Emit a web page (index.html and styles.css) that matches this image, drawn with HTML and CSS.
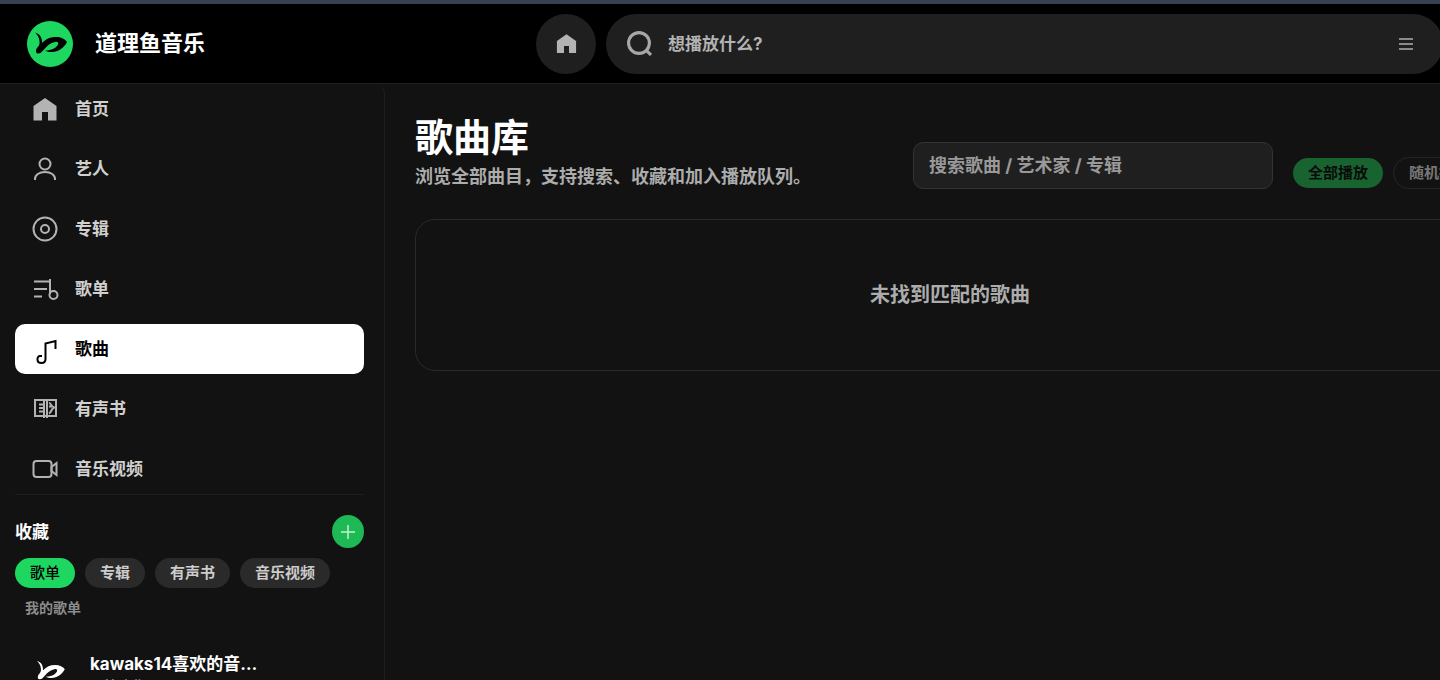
FILE: index.html
```
<!DOCTYPE html>
<html lang="zh-CN">
<head>
    <meta charset="UTF-8">
    <title>道理鱼音乐</title>
    <link rel="stylesheet" href="styles.css">
</head>
<body>
<svg class="sprite" aria-hidden="true">
    <symbol id="fish" viewBox="0 0 46 46">
        <path d="M8 11.500C13 13 15 16 15 22 19 18 23 16 29 16c5 0 9 2 11 5-3 6-9 10-15 10-3 0-5-.5-7-1.500 7 0 11-2.500 13-6 1-2.500-1-3-3-2.500-5 1-8 4-11 7.500C15 30.500 14 32.500 11 32.500S9 28 10 27c2-2 3-4 2.500-7C12 16 10.500 14 8 11.500z"/>
    </symbol>
    <symbol id="house" viewBox="0 0 30 30">
        <path d="M15 4 26.500 12v14.500H18V18h-6v8.500H3.500V12z"/>
    </symbol>
</svg>

<div class="app">
    <header class="topbar">
        <a href="#" class="brand">
            <svg class="logo" viewBox="0 0 46 46"><circle cx="23" cy="23" r="23"/><use href="#fish"/></svg>
            <span>道理鱼音乐</span>
        </a>
        <div class="top-search">
            <button class="home-btn" aria-label="首页"><svg><use href="#house"/></svg></button>
            <div class="search-box">
                <svg class="search-icon" viewBox="0 0 24 24"><circle cx="11.500" cy="11.500" r="10"/><path d="m18.500 18.500 4.500 4.500"/></svg>
                <input type="text" placeholder="想播放什么?" aria-label="搜索">
                <button class="menu-btn" aria-label="菜单">
                    <svg viewBox="0 0 14 12"><path d="M0 1h14M0 6h14M0 11h14"/></svg>
                </button>
            </div>
        </div>
    </header>

    <div class="body">
        <aside class="sidebar">
            <nav class="nav">
                <a href="#"><svg class="solid"><use href="#house"/></svg>首页</a>
                <a href="#"><svg viewBox="0 0 30 30"><circle cx="15" cy="10" r="5.500"/><path d="M5 26v-1c0-4 4-7 10-7s10 3 10 7v1"/></svg>艺人</a>
                <a href="#"><svg viewBox="0 0 30 30"><circle cx="15" cy="15" r="11.500"/><circle cx="15" cy="15" r="4"/></svg>专辑</a>
                <a href="#"><svg viewBox="0 0 30 30"><path d="M4 7.500h16M4 15h13M4 22.500h8M20 5v15"/><circle cx="23.500" cy="21" r="4"/></svg>歌单</a>
                <a href="#" class="active"><svg viewBox="0 0 30 30"><path d="M12 22h-2a2.500 3 0 0 0-2.500 3.500c0 2 1.500 3.500 4 3.500 2.500 0 4-1.500 4-4V9.500L25.500 7v8"/></svg>歌曲</a>
                <a href="#"><svg viewBox="0 0 30 30"><path d="M5 6h21v16H5zM14 6v18M17 6v18M9 10.500h4M9 14h4M9 17.500h4"/><path d="M19 9c2 0 2 3.500 5 4.500-3 1.500-2.500 5-5 6M19 12.500h4"/></svg>有声书</a>
                <a href="#"><svg viewBox="0 0 30 30"><rect x="3.500" y="7" width="18" height="16" rx="3"/><path d="m21.500 13 5-4v12l-5-4z"/></svg>音乐视频</a>
            </nav>

            <section class="library">
                <div class="library-head">
                    <h2>收藏</h2>
                    <button class="add-btn" aria-label="新建歌单"><svg viewBox="0 0 14 14"><path d="M7 0v14M0 7h14"/></svg></button>
                </div>
                <div class="chips">
                    <button class="chip on">歌单</button>
                    <button class="chip">专辑</button>
                    <button class="chip">有声书</button>
                    <button class="chip">音乐视频</button>
                </div>
                <h3>我的歌单</h3>
                <a href="#" class="playlist">
                    <svg class="cover"><use href="#fish"/></svg>
                    <div class="playlist-info">
                        <div class="playlist-name">kawaks14喜欢的音乐歌单</div>
                        <div class="playlist-count">0 首歌曲</div>
                    </div>
                </a>
            </section>
        </aside>

        <main class="content">
            <div class="page-head">
                <div class="page-title">
                    <h1>歌曲库</h1>
                    <p>浏览全部曲目，支持搜索、收藏和加入播放队列。</p>
                </div>
                <div class="tools">
                    <input type="text" class="filter" placeholder="搜索歌曲 / 艺术家 / 专辑" aria-label="搜索歌曲">
                    <div class="actions">
                        <button class="play-all" disabled>全部播放</button>
                        <button class="shuffle" disabled>随机播放</button>
                    </div>
                </div>
            </div>
            <div class="empty">未找到匹配的歌曲</div>
        </main>
    </div>
</div>
</body>
</html>
```
FILE: styles.css
```
* {
    box-sizing: border-box;
}
body {
    margin: 0;
    height: 100vh;
    overflow: hidden;
    background-color: #121212;
    color: #fff;
    font-family: Inter, "Noto Sans CJK SC", sans-serif;
    font-weight: 700;
    line-height: 1.5;
}
a {
    color: inherit;
    text-decoration: none;
}
button, input {
    font-family: inherit;
    font-weight: inherit;
    line-height: inherit;
    border: none;
    padding: 0;
}
h1, h2, h3, p {
    margin: 0;
}
.sprite {
    display: none;
}
.app {
    display: flex;
    flex-direction: column;
    height: 100vh;
    min-width: 1515px;
    border-top: 4px solid #364152;
}

/* top bar */
.topbar {
    display: flex;
    align-items: center;
    flex-shrink: 0;
    height: 80px;
    padding: 0 72px 0 27px;
    background-color: #000;
    border-bottom: 1px solid #1e1e1e;
}
.brand {
    display: flex;
    align-items: center;
    gap: 22px;
    width: 509px;
    font-size: 22px;
}
.logo {
    width: 46px;
    height: 46px;
}
.logo circle {
    fill: #1ed760;
}
.top-search {
    display: flex;
    flex: 1;
    gap: 10px;
}
.home-btn {
    display: flex;
    align-items: center;
    justify-content: center;
    width: 60px;
    height: 60px;
    border-radius: 50%;
    background-color: #1f1f1f;
}
.home-btn svg {
    width: 25px;
    height: 25px;
    fill: #b3b3b3;
}
.search-box {
    display: flex;
    flex: 1;
    align-items: center;
    height: 60px;
    padding: 0 30px 0 21px;
    border-radius: 30px;
    background-color: #1f1f1f;
}
.search-icon {
    width: 25px;
    height: 25px;
    fill: none;
    stroke: #a7a7a7;
    stroke-width: 3;
}
.search-box input {
    flex: 1;
    margin-left: 16px;
    background: none;
    color: #fff;
    font-size: 17px;
    line-height: 28px;
}
.search-box input::placeholder {
    color: #b3b3b3;
}
.menu-btn {
    display: flex;
    background: none;
}
.menu-btn svg {
    width: 14px;
    height: 12px;
    stroke: #8a8a8a;
    stroke-width: 2;
}

.body {
    display: flex;
    flex: 1;
    min-height: 0;
}

/* sidebar */
.sidebar {
    width: 385px;
    flex-shrink: 0;
    padding: 0 20px 0 15px;
    overflow: hidden;
    border-right: 1px solid #1e1e1e;
    border-top-right-radius: 10px;
}
.nav {
    display: flex;
    flex-direction: column;
    gap: 10px;
    border-bottom: 1px solid #1e1e1e;
}
.nav a {
    display: flex;
    align-items: center;
    gap: 15px;
    height: 50px;
    padding: 0 15px;
    border-radius: 10px;
    color: #d0d0d0;
    font-size: 17px;
    line-height: 28px;
}
.nav svg {
    width: 30px;
    height: 30px;
    fill: none;
    stroke: #b3b3b3;
    stroke-width: 2;
}
.nav .solid {
    fill: #b3b3b3;
    stroke: none;
}
.nav .active {
    background-color: #fff;
    color: #000;
}
.nav .active svg {
    stroke: #000;
}
.library {
    padding-top: 20px;
}
.library-head {
    display: flex;
    align-items: center;
    justify-content: space-between;
    margin-bottom: 10px;
}
.library-head h2 {
    font-size: 17px;
    line-height: 28px;
}
.add-btn {
    display: flex;
    align-items: center;
    justify-content: center;
    width: 32px;
    height: 33px;
    border-radius: 50%;
    background-color: #1db954;
}
.add-btn svg {
    width: 14px;
    height: 14px;
    stroke: #c5eed3;
    stroke-width: 1.5;
}
.chips {
    display: flex;
    gap: 10px;
}
.chip {
    height: 30px;
    padding: 0 15px;
    border-radius: 15px;
    background-color: #2a2a2a;
    color: #ccc;
    font-size: 15px;
}
.chip.on {
    background-color: #1ed760;
    color: #000;
    font-weight: 500;
}
.library h3 {
    padding: 0 10px;
    margin-top: 10px;
    color: #8c8c8c;
    font-size: 14px;
    line-height: 20px;
}
.playlist {
    display: flex;
    gap: 20px;
    margin-top: 30px;
    padding: 0 15px;
}
.cover {
    width: 40px;
    height: 46px;
    fill: #fff;
}
.playlist-info {
    width: 170px;
    padding-top: 3px;
}
.playlist-name {
    overflow: hidden;
    font-size: 17px;
    line-height: 26px;
    text-overflow: ellipsis;
    white-space: nowrap;
}
.playlist-count {
    color: #999;
    font-size: 14px;
    font-weight: 500;
    line-height: 18px;
}

/* song library */
.content {
    flex: 1;
    padding: 30px;
}
.page-head {
    display: flex;
    justify-content: space-between;
}
h1 {
    font-size: 38px;
    line-height: 46px;
}
.page-title p {
    padding-top: 5px;
    color: #acacac;
    font-size: 18px;
    line-height: 24px;
}
.tools {
    display: flex;
    align-items: flex-end;
    gap: 20px;
}
.filter {
    width: 360px;
    height: 47px;
    padding: 0 15px;
    border: 1px solid #333;
    border-radius: 10px;
    background-color: #1f1f1f;
    color: #fff;
    font-size: 18px;
}
.filter::placeholder {
    color: #999;
}
.actions {
    display: flex;
    align-items: center;
    gap: 10px;
}
.actions button {
    height: 30px;
    padding: 0 15px;
    border-radius: 16px;
    font-size: 15px;
}
.actions .play-all {
    background-color: #18632f;
    color: #0b0b0b;
}
.actions .shuffle {
    height: 32px;
    border: 1px solid #252525;
    background: none;
    color: #777;
}
.empty {
    margin-top: 30px;
    padding: 60px 30px;
    border: 1px solid #2a2a2a;
    border-radius: 20px;
    color: #acacac;
    font-size: 20px;
    line-height: 30px;
    text-align: center;
}
```
